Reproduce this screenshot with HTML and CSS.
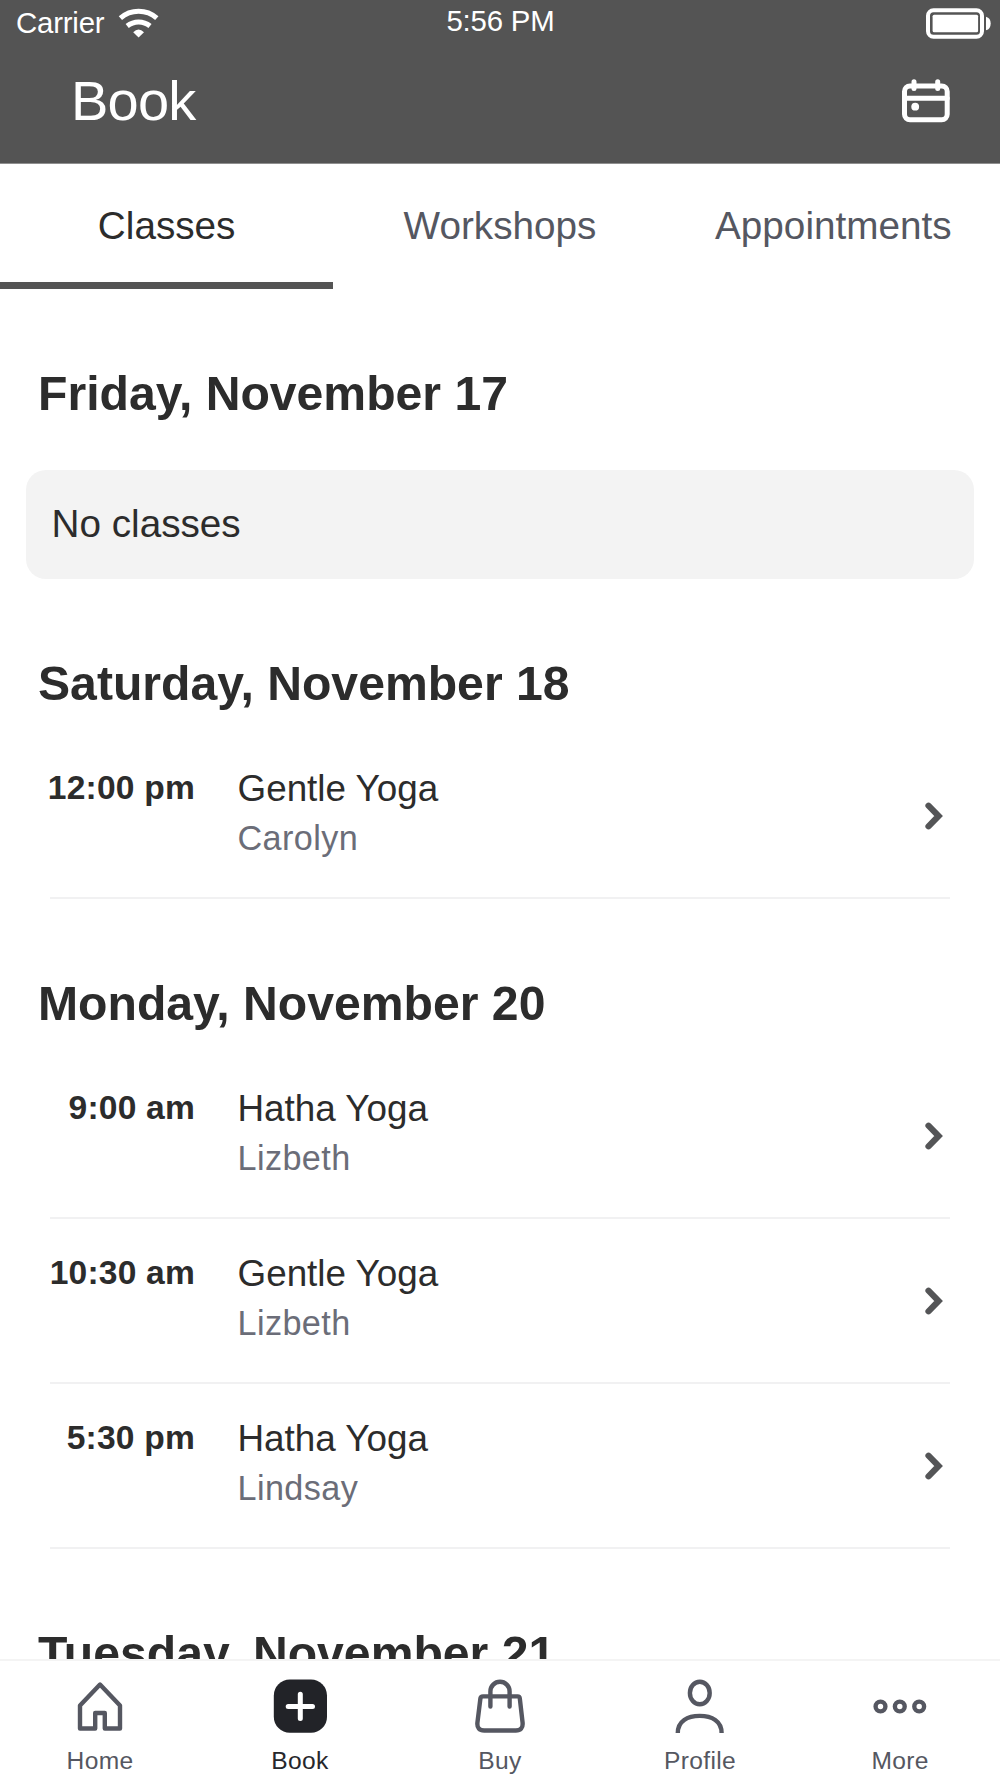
FILE: index.html
```html
<!DOCTYPE html>
<html lang="en">
<head>
<meta charset="utf-8">
<title>Book</title>
<link rel="stylesheet" href="styles.css">
</head>
<body>
<div class="app">
  <header class="header">
    <div class="status">
      <div class="status-left">
        <span>Carrier</span>
        <svg class="wifi" width="42" height="32" viewBox="118 7 42 32" fill="none" stroke="#fff" stroke-width="5">
          <path d="M120.4 18.2A27.6 27.6 0 0 1 156.8 18.2"/>
          <path d="M127.2 26A18 18 0 0 1 150 26"/>
          <path d="M133.2 32.2Q138.5 26.800 144 32.200L138.600 37.600Z" fill="#fff" stroke="none"/>
        </svg>
      </div>
      <span class="clock">5:56 PM</span>
      <svg class="battery" width="66" height="32" viewBox="925 7 66 32">
        <rect x="928" y="10.300" width="54" height="26.400" rx="5.500" fill="none" stroke="#fff" stroke-width="4"/>
        <rect x="932.600" y="14.700" width="45.500" height="17.600" rx="1.500" fill="#fff"/>
        <path d="M986 16.700Q990.700 18 990.700 23.500T986 30.300Z" fill="#fff"/>
      </svg>
    </div>
    <div class="titlebar">
      <h1 class="title">Book</h1>
      <svg width="50" height="46" viewBox="901 78 50 46" fill="none" stroke="#fff" stroke-width="5" stroke-linecap="round">
        <rect x="904.500" y="86" width="42.700" height="33.800" rx="5.500"/>
        <path d="M904.500 98.300H947.200M914 81.700V88.500M937.700 81.700V88.500"/>
        <circle cx="915.200" cy="106.700" r="3.900" fill="#fff" stroke="none"/>
      </svg>
    </div>
  </header>

  <nav class="tabs">
    <a class="tab active">Classes</a>
    <a class="tab">Workshops</a>
    <a class="tab">Appointments</a>
  </nav>

  <main class="schedule">
    <section class="day">
      <h2 class="date">Friday, November 17</h2>
      <p class="empty">No classes</p>
    </section>
    <section class="day">
      <h2 class="date">Saturday, November 18</h2>
      <ul class="list">
        <li class="row">
          <span class="time">12:00 pm</span>
          <div class="info"><div class="name">Gentle Yoga</div><div class="teacher">Carolyn</div></div>
          <svg class="chevron" width="20" height="30" viewBox="0 0 20 30"><path d="M4.500 4.700L14.600 15L4.500 25.300"/></svg>
        </li>
      </ul>
    </section>
    <section class="day">
      <h2 class="date">Monday, November 20</h2>
      <ul class="list">
        <li class="row">
          <span class="time">9:00 am</span>
          <div class="info"><div class="name">Hatha Yoga</div><div class="teacher">Lizbeth</div></div>
          <svg class="chevron" width="20" height="30" viewBox="0 0 20 30"><path d="M4.500 4.700L14.600 15L4.500 25.300"/></svg>
        </li>
        <li class="row">
          <span class="time">10:30 am</span>
          <div class="info"><div class="name">Gentle Yoga</div><div class="teacher">Lizbeth</div></div>
          <svg class="chevron" width="20" height="30" viewBox="0 0 20 30"><path d="M4.500 4.700L14.600 15L4.500 25.300"/></svg>
        </li>
        <li class="row">
          <span class="time">5:30 pm</span>
          <div class="info"><div class="name">Hatha Yoga</div><div class="teacher">Lindsay</div></div>
          <svg class="chevron" width="20" height="30" viewBox="0 0 20 30"><path d="M4.500 4.700L14.600 15L4.500 25.300"/></svg>
        </li>
      </ul>
    </section>
    <section class="day">
      <h2 class="date">Tuesday, November 21</h2>
    </section>
  </main>

  <nav class="bottom">
    <a class="item">
      <svg class="icon" viewBox="0 0 60 60"><path d="M30 8.500L10 29.500V52.500H25.200V37H34.800V52.500H50V29.500Z"/></svg>
      <span>Home</span>
    </a>
    <a class="item current">
      <svg class="icon" viewBox="0 0 60 60"><rect class="tile" x="3.800" y="3.500" width="53.200" height="53.300" rx="16"/><path class="plus" d="M30.300 18.300V42.500M18.200 30.400H42.500"/></svg>
      <span>Book</span>
    </a>
    <a class="item">
      <svg class="icon" viewBox="0 0 60 60"><path d="M13 20.400H47.600Q49.600 20.400 49.800 22.400L52.600 46.800Q53.200 54.500 45.800 54.500H14.200Q6.800 54.500 7.400 46.800L10.400 22.400Q10.700 20.400 13 20.400Z"/><path d="M20.400 30.500V15.400a9.600 9.600 0 0 1 19.200 0V30.500"/></svg>
      <span>Buy</span>
    </a>
    <a class="item">
      <svg class="icon" viewBox="0 0 60 60"><ellipse cx="29.800" cy="17" rx="9.900" ry="11.300"/><path class="butt" d="M7.800 57C7.800 45 17.500 39.900 29.700 39.900S51.600 45 51.600 57"/></svg>
      <span>Profile</span>
    </a>
    <a class="item">
      <svg class="icon" viewBox="0 0 60 60"><circle cx="10.500" cy="30.500" r="4.900"/><circle cx="29.800" cy="30.500" r="4.900"/><circle cx="49.200" cy="30.500" r="4.900"/></svg>
      <span>More</span>
    </a>
  </nav>
</div>
</body>
</html>
```
FILE: styles.css
```css
* { box-sizing: border-box; margin: 0; padding: 0; }
body {
  background: #fff;
  color: #2c2c2c;
  font-family: "Liberation Sans", Arial, sans-serif;
}
.app {
  display: flex;
  flex-direction: column;
  width: 1000px;
  height: 1778px;
  overflow: hidden;
}
.header {
  flex: none;
  height: 164px;
  border-bottom: 1px solid #8f8f8f;
  background: #545454;
  color: #fff;
}
.status {
  display: grid;
  grid-template-columns: 1fr auto 1fr;
  height: 68px;
  padding: 4px 9px 0 16px;
  font-size: 29.4px;
  line-height: 34px;
  letter-spacing: -.2px;
}
.status-left { display: flex; gap: 14px; padding-top: 2px; }
.wifi { margin-top: 1px; }
.clock { padding-right: 6px; }
.battery { justify-self: end; margin-top: 3px; }
.titlebar {
  display: flex;
  justify-content: space-between;
  padding: 0 49px 0 71px;
}
.titlebar svg { margin-top: 10px; }
.title {
  font-size: 56px;
  font-weight: 400;
  line-height: 66px;
  letter-spacing: -.8px;
}

.tabs { display: grid; flex: none; grid-template-columns: repeat(3, 1fr); height: 125px; }
.tab {
  padding-top: 40px;
  border-bottom: 7px solid transparent;
  color: #555761;
  font-size: 38.7px;
  line-height: 44px;
  text-align: center;
}
.tab.active { border-color: #545454; color: #2c2c2c; }

.schedule { flex: 1; min-height: 0; overflow: hidden; }
.day { padding-top: 75px; }
.date { padding-left: 38px; font-size: 48.150px; line-height: 58px; }
.empty {
  height: 109px;
  margin: 48px 26px 0;
  padding: 32px 25.500px;
  border-radius: 20px;
  background: #f3f3f3;
  font-size: 38.7px;
  line-height: 44px;
}
.list { margin-top: 22px; padding: 0 50px; list-style: none; }
.row {
  display: flex;
  height: 165px;
  padding-top: 30px;
  border-bottom: 2px solid #f1f1f2;
  line-height: 50px;
}
.time {
  width: 150px;
  margin: 0 42.500px 0 -5px;
  font-size: 33.600px;
  font-weight: 700;
  letter-spacing: .2px;
  line-height: 48px;
  text-align: right;
  white-space: nowrap;
}
.info { flex: 1; }
.name { font-size: 36.850px; }
.teacher { color: #6b6d78; font-size: 34.200px; letter-spacing: .4px; line-height: 48px; }
.chevron {
  margin: 37px 6px 0 0;
  fill: none;
  stroke: #545557;
  stroke-width: 6.200;
  stroke-linecap: round;
}

.bottom {
  display: grid;
  flex: none;
  grid-template-columns: repeat(5, 1fr);
  height: 119px;
  border-top: 2px solid #f4f4f4;
  background: #fff;
}
.item {
  display: flex;
  flex-direction: column;
  align-items: center;
  gap: 10px;
  padding-top: 15px;
  color: #555761;
  font-size: 24.600px;
  line-height: 30px;
  letter-spacing: .3px;
}
.current { color: #26272b; }
.icon {
  width: 60px;
  height: 60px;
  fill: none;
  stroke: #555761;
  stroke-width: 4.400;
  stroke-linecap: round;
  stroke-linejoin: round;
}
.icon .butt { stroke-linecap: butt; }
.tile { fill: #222328; stroke: none; }
.icon .plus { stroke: #fff; stroke-width: 5; }
```
